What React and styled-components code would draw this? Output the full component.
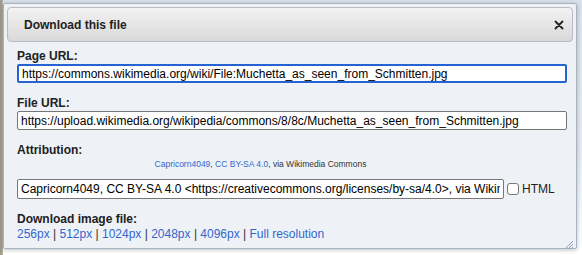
import React, { useState } from 'react';
import styled, { createGlobalStyle } from 'styled-components';

const GlobalStyle = createGlobalStyle`
    html, body {
        margin: 0;
        padding: 0;
    }

    body {
        width: 582px;
        height: 255px;
        overflow: hidden;
        font-family: "Liberation Sans", Arial, sans-serif;
        background:
            linear-gradient(90deg, #9a9486 0, #b7b3a8 3px, transparent 3px),
            linear-gradient(180deg, #d9e1ea 0, #e6ebf1 60%, #ffffff 97%);
    }
`;

const sizes = ['256px', '512px', '1024px', '2048px', '4096px'];

function App() {
    const [html, setHtml] = useState(false);

    return (
        <>
            <GlobalStyle />
            <Dialog>
                <TitleBar>
                    <TitleText>Download this file</TitleText>
                    <CloseButton aria-label="close">
                        <svg width="10" height="10" viewBox="0 0 10 10">
                            <path d="M1.5 1.5 L8.5 8.5 M8.5 1.5 L1.5 8.5" stroke="#222" strokeWidth="1.8" strokeLinecap="round" />
                        </svg>
                    </CloseButton>
                </TitleBar>
                <Content>
                    <Field>
                        <Label>Page URL:</Label>
                        <UrlInput
                            focused
                            readOnly
                            value="https://commons.wikimedia.org/wiki/File:Muchetta_as_seen_from_Schmitten.jpg"
                        />
                    </Field>
                    <Field>
                        <Label>File URL:</Label>
                        <UrlInput
                            readOnly
                            value="https://upload.wikimedia.org/wikipedia/commons/8/8c/Muchetta_as_seen_from_Schmitten.jpg"
                        />
                    </Field>
                    <Field>
                        <Label>Attribution:</Label>
                        <Preview>
                            <Link>Capricorn4049</Link>, <Link>CC BY-SA 4.0</Link>, via Wikimedia Commons
                        </Preview>
                        <AttributionRow>
                            <UrlInput
                                short
                                readOnly
                                value="Capricorn4049, CC BY-SA 4.0 <https://creativecommons.org/licenses/by-sa/4.0>, via Wikimedia Commons"
                            />
                            <CheckLabel>
                                <CheckBox type="checkbox" checked={html} onChange={() => setHtml(!html)} />
                                HTML
                            </CheckLabel>
                        </AttributionRow>
                    </Field>
                    <Field>
                        <Label>Download image file:</Label>
                        <Sizes>
                            {sizes.map((s) => (
                                <React.Fragment key={s}>
                                    <Link>{s}</Link>
                                    <Sep> | </Sep>
                                </React.Fragment>
                            ))}
                            <Link>Full resolution</Link>
                        </Sizes>
                    </Field>
                </Content>
                <Grip>
                    <svg width="10" height="10" viewBox="0 0 10 10">
                        <path d="M9 1 L1 9 M9 4 L4 9 M9 7 L7 9" stroke="#8a9bb8" strokeWidth="1" />
                    </svg>
                </Grip>
            </Dialog>
        </>
    );
}

const Dialog = styled.div`
    position: relative;
    box-sizing: border-box;
    margin: 3px 0 0 3px;
    width: 574px;
    height: 246px;
    background-color: #eef2f7;
    border: 1px solid #a9b4c2;
    border-radius: 2px;
    box-shadow: 0 1px 4px rgba(0, 0, 0, 0.25);
    padding: 3px;
`;

const TitleBar = styled.div`
    box-sizing: border-box;
    display: flex;
    align-items: center;
    justify-content: space-between;
    height: 35px;
    padding: 0 8px 0 16px;
    border: 1px solid #b8bcc2;
    border-radius: 4px;
    background: linear-gradient(180deg, #f2f2f2 0%, #e3e3e3 60%, #d9d9d9 100%);
`;

const TitleText = styled.span`
    font-size: 12px;
    font-weight: bold;
    color: #222;
`;

const CloseButton = styled.span`
    display: flex;
    align-items: center;
`;

const Content = styled.div`
    padding: 7px 10px 0 10px;
`;

const Field = styled.div`
    margin-bottom: 13px;
`;

const Label = styled.div`
    font-size: 12px;
    font-weight: bold;
    color: #202122;
    line-height: 15px;
`;

const UrlInput = styled.input`
    display: block;
    box-sizing: border-box;
    width: ${(props) => (props.short ? '487px' : '550px')};
    height: ${(props) => (props.short ? '20px' : '19px')};
    padding: 0 3px;
    margin: 0;
    font-family: "Liberation Sans", Arial, sans-serif;
    font-size: 12px;
    color: #000;
    background: #fff;
    outline: none;
    border: ${(props) => (props.focused ? '2px solid #2463d1' : '1px solid #767676')};
    border-radius: 2px;
`;

const Preview = styled.div`
    width: 487px;
    text-align: center;
    font-size: 8.5px;
    line-height: 11px;
    color: #333;
    margin: 1px 0 9px 0;
`;

const Link = styled.a`
    color: #3366cc;
    cursor: pointer;
`;

const AttributionRow = styled.div`
    display: flex;
    align-items: center;
    gap: 3px;
`;

const CheckLabel = styled.label`
    display: flex;
    align-items: center;
    gap: 3px;
    font-size: 12px;
    color: #222;
`;

const CheckBox = styled.input`
    appearance: none;
    margin: 0;
    width: 12px;
    height: 12px;
    border: 1px solid #777;
    border-radius: 3px;
    background: #fff;
`;

const Sizes = styled.div`
    font-size: 12px;
    line-height: 14px;
`;

const Sep = styled.span`
    color: #333;
`;

const Grip = styled.div`
    position: absolute;
    right: 2px;
    bottom: 2px;
    width: 10px;
    height: 10px;
`;

export default App;
